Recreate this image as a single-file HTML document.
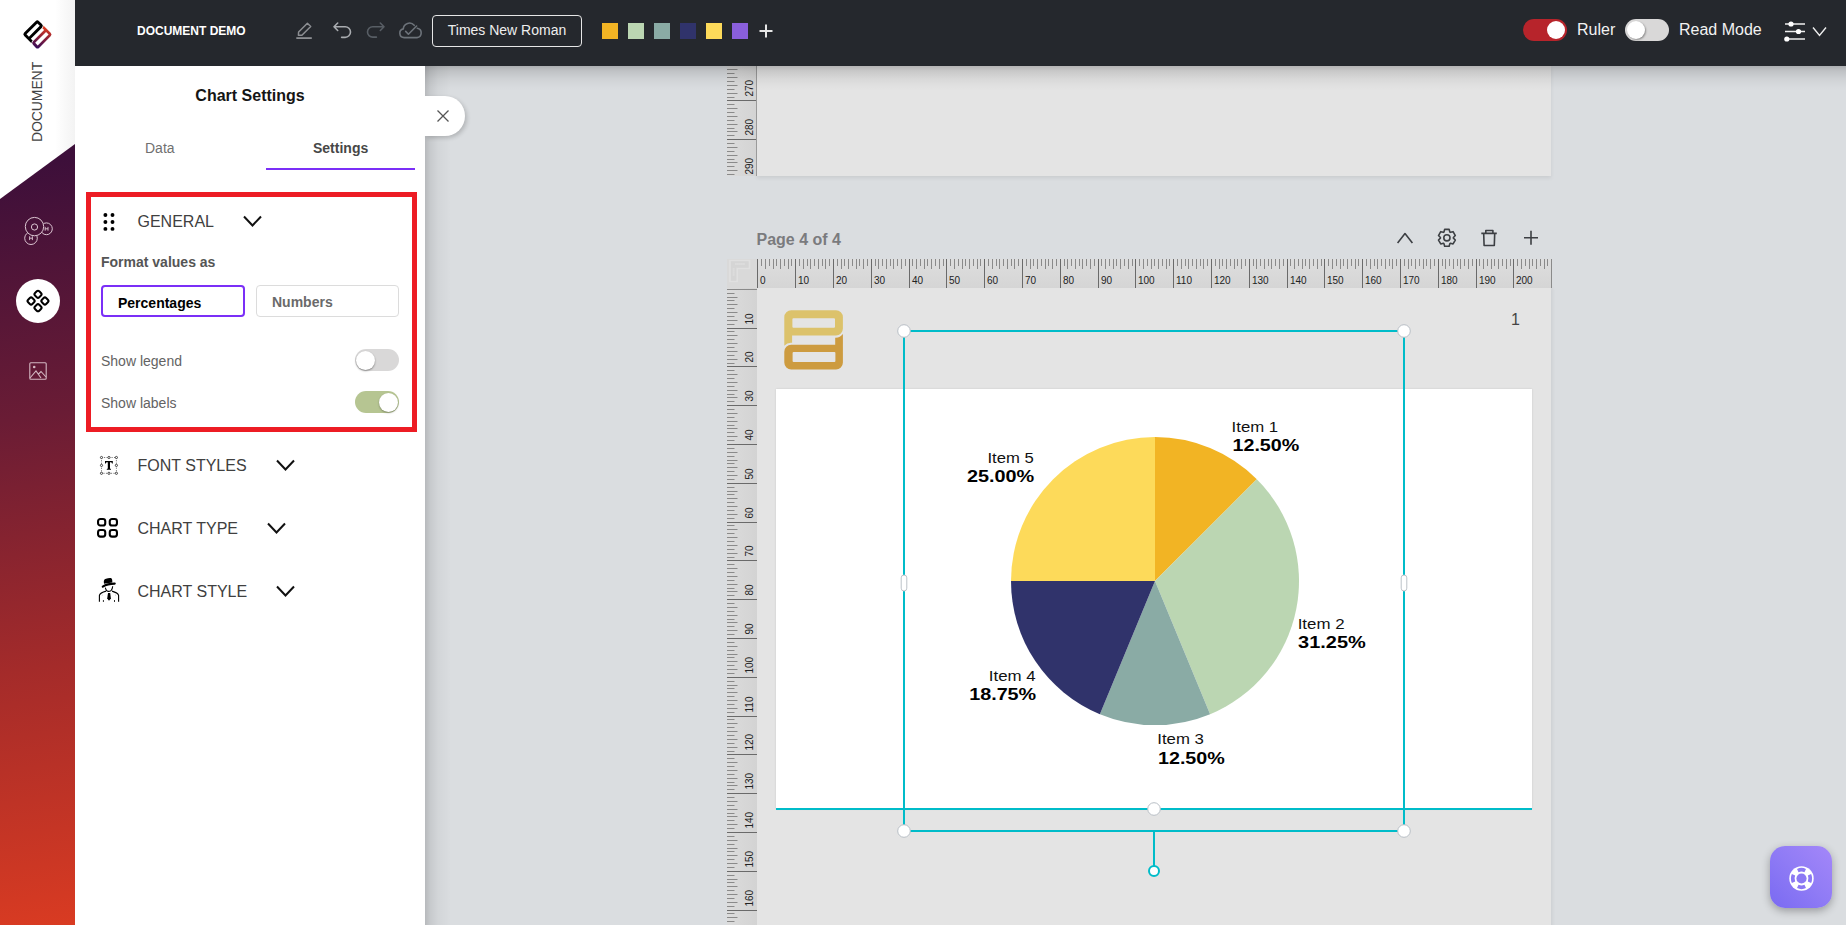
<!DOCTYPE html>
<html><head><meta charset="utf-8">
<style>
*{box-sizing:border-box}
html,body{margin:0;padding:0}
body{width:1846px;height:925px;overflow:hidden;position:relative;font-family:"Liberation Sans",sans-serif;background:#dadde0}
.a{position:absolute}
svg{position:absolute;overflow:visible}
/* sidebar */
#side{left:0;top:0;width:75px;height:925px;background:linear-gradient(172deg,#3a0e3a 0%,#3d0f3a 18%,#6a1c35 45%,#a42b2a 72%,#d93b22 100%)}
#sidewhite{left:0;top:0;width:75px;height:200px;background:linear-gradient(to right,#fff 0,#fff 55px,#f3f3f3 75px);clip-path:polygon(0 0,75px 0,75px 144px,0 199px)}
/* topbar */
#top{left:75px;top:0;width:1771px;height:66px;background:#25282d}
.tb-title{left:137px;top:23px;color:#fff;font-weight:bold;font-size:13px;white-space:nowrap}
.fontbtn{left:432px;top:15px;width:150px;height:32px;border:1.5px solid #e6e6e6;border-radius:4px;color:#eee;font-size:14px;text-align:center;line-height:29px}
.sw{top:23px;width:16px;height:16px}
.tog{width:44px;height:22px;border-radius:11px}
.knob{position:absolute;top:2px;width:18px;height:18px;border-radius:50%;background:#fff}
.toptxt{color:#f2f2f2;font-size:17px;top:20px;white-space:nowrap}
/* panel */
#panel{left:75px;top:66px;width:350px;height:859px;background:#fff}
.sec{color:#404040;font-size:16px;white-space:nowrap}
.chev{position:absolute}
/* canvas */
#canvas{left:425px;top:66px;width:1421px;height:859px;background:#dadde0;overflow:hidden}
.ruler-h{background:linear-gradient(#dedede,#d5d5d5)}
.ruler-v{background:linear-gradient(to right,#dcdcdc,#d3d3d3)}
</style></head>
<body>
<div id="side" class="a"></div>
<div id="sidewhite" class="a"></div>
<!-- logo -->
<svg style="left:15px;top:12px" width="45" height="45" viewBox="0 0 45 45">
<defs><linearGradient id="lg1" gradientUnits="userSpaceOnUse" x1="784" y1="370" x2="843" y2="334"><stop offset="0" stop-color="#2a0a5e"/><stop offset="0.5" stop-color="#8a1f3a"/><stop offset="1" stop-color="#e8401c"/></linearGradient></defs>
<g transform="translate(22.4 22.4) rotate(-45) scale(0.36) translate(-813.6 -339.9)">
<path d="M784.3 345.7 V317.2 A7 7 0 0 1 791.3 310.2 H835.9 A7 7 0 0 1 842.9 317.2 V328.6 A7 7 0 0 1 835.9 335.6 H792.1 V342.8 A9 9 0 0 0 784.3 345.7 Z M792.4 318.2 H835 V327.8 H792.4 Z" fill="#000" fill-rule="evenodd"/>
<path d="M842.9 334.1 V362.6 A7 7 0 0 1 835.9 369.6 H791.3 A7 7 0 0 1 784.3 362.6 V351.7 A7 7 0 0 1 791.3 344.7 H835.2 V337.7 A9 9 0 0 0 842.9 334.1 Z M792.6 352.1 H835.4 V362.1 H792.6 Z" fill="url(#lg1)" fill-rule="evenodd"/>
</g></svg>
<div class="a" style="left:29px;top:142.3px;transform:rotate(-90deg);transform-origin:0 0;font-size:14px;color:#444;white-space:nowrap;letter-spacing:-0.1px">DOCUMENT</div>
<!-- molecule -->
<svg style="left:15px;top:205px" width="45" height="45" viewBox="0 0 45 45"><defs><mask id="mm"><rect width="45" height="45" fill="#fff"/><circle cx="19.5" cy="21.6" r="9.6" fill="#000"/></mask></defs><g fill="none" stroke="#dcc6d2" stroke-width="1"><circle cx="19.5" cy="21.6" r="9.2"/><circle cx="19.5" cy="22" r="3.1"/><g mask="url(#mm)"><circle cx="31.4" cy="23.8" r="5.9"/><circle cx="16" cy="33.2" r="6.3"/></g></g><g stroke="#dcc6d2" stroke-width="0.9" fill="none"><path d="M30.2 21.9V25.7M33 21.9V25.7M30.2 23.8H33M14.6 31.3V35.1M17.4 31.3V35.1M14.6 33.2H17.4"/></g></svg>
<div class="a" style="left:16px;top:279px;width:44px;height:44px;border-radius:50%;background:#fff"></div>
<svg style="left:26px;top:289px" width="24" height="24" viewBox="0 0 24 24"><g fill="none" stroke="#000" stroke-width="2"><rect x="9" y="2.3" width="6" height="6" rx="1.8" transform="rotate(45 12 5.3)"/><rect x="9" y="15.7" width="6" height="6" rx="1.8" transform="rotate(45 12 18.7)"/><rect x="2.0999999999999996" y="9" width="6" height="6" rx="1.8" transform="rotate(45 5.1 12)"/><rect x="15.899999999999999" y="9" width="6" height="6" rx="1.8" transform="rotate(45 18.9 12)"/></g></svg>
<!-- image icon -->
<svg style="left:29px;top:362px" width="18" height="18" viewBox="0 0 18 18"><g fill="none" stroke="#d3b8c2" stroke-width="1.1"><rect x="0.8" y="0.8" width="16.4" height="16.4" rx="1"/><path d="M1 16 L7 9 L12 16 M9 12.5 L12 9.5 L17 15"/></g><circle cx="5.2" cy="5" r="1.3" fill="#d3b8c2"/></svg>


<div id="top" class="a">
</div>
<div class="a tb-title" style="left:137px;top:24px;font-size:12px">DOCUMENT DEMO</div>
<!-- pencil/undo/redo/cloud -->
<svg style="left:290px;top:15px" width="140" height="30" viewBox="290 15 140 30"><g fill="none" stroke-width="1.6" stroke-linejoin="round" stroke-linecap="round">
<path d="M298.4 35.3 L298.6 32 L307.4 23.2 L310.7 26.5 L301.9 35.3 Z" stroke="#8c8e92" stroke-width="1.5"/>
<path d="M296.3 38.1 H311.8" stroke="#8c8e92" stroke-width="1.8" stroke-linecap="butt"/>
<path d="M337.7 23 L334 26.75 L337.7 30.5 M334.2 26.75 H345.2 A5.3 5.3 0 0 1 345.2 37.35 H341.6" stroke="#a9acb0"/>
<path d="M380.3 23 L384 26.75 L380.3 30.5 M383.8 26.75 H372.7 A5.2 5.2 0 0 0 372.7 37.15 H376.4" stroke="#585e65"/>
<path d="M404.2 37.6 A4.4 4.4 0 0 1 403.3 28.9 A6.2 6.2 0 0 1 414.2 25.3 M417.3 28.3 A4.7 4.7 0 0 1 417 37.6 H404.2" stroke="#6d737a"/>
<path d="M405.7 31.4 L408.4 34.2 L416.6 26" stroke="#6d737a"/>
</g></svg>
<div class="a fontbtn">Times New Roman</div>
<div class="a sw" style="left:602px;background:#f2b424"></div>
<div class="a sw" style="left:628px;background:#bbd6b2"></div>
<div class="a sw" style="left:654px;background:#8aaba5"></div>
<div class="a sw" style="left:680px;background:#30336b"></div>
<div class="a sw" style="left:706px;background:#fdda5a"></div>
<div class="a sw" style="left:732px;background:#8a5fdc"></div>
<svg style="left:759px;top:24px" width="14" height="14" viewBox="0 0 14 14"><path d="M7 0.5 V13.5 M0.5 7 H13.5" stroke="#e6e6e6" stroke-width="2"/></svg>
<div class="a tog" style="left:1523px;top:19px;background:#b7242b"><div class="knob" style="left:24px"></div></div>
<div class="a toptxt" style="left:1577px;font-size:16px;top:21px">Ruler</div>
<div class="a tog" style="left:1625px;top:19px;background:#d9d8d8"><div class="knob" style="left:1.5px;box-shadow:1px 1px 2px rgba(0,0,0,.35)"></div></div>
<div class="a toptxt" style="left:1679px;font-size:16px;top:21px">Read Mode</div>
<!-- sliders -->
<svg style="left:1784px;top:20px" width="22" height="22" viewBox="0 0 22 22"><g stroke="#eee" stroke-width="1.6"><path d="M1 4 H21 M1 11.5 H21 M1 19 H21"/></g><g fill="#fff"><circle cx="7" cy="4" r="2.6"/><circle cx="14.5" cy="11.5" r="2.6"/><circle cx="2.8" cy="19" r="2.6"/></g></svg>
<svg style="left:1812px;top:26px" width="15" height="11" viewBox="0 0 15 11"><path d="M1 1.5 L7.5 9.5 L14 1.5" fill="none" stroke="#eee" stroke-width="1.4"/></svg>

<div id="panel" class="a"></div>
<div class="a" style="left:75px;top:87px;width:350px;text-align:center;font-size:16px;font-weight:bold;color:#151515">Chart Settings</div>
<div class="a" style="left:145px;top:140px;font-size:14px;color:#707070">Data</div>
<div class="a" style="left:313px;top:140px;font-size:14px;font-weight:bold;color:#474747">Settings</div>
<div class="a" style="left:266px;top:168px;width:149px;height:2px;background:#7b2ff7"></div>
<!-- red box -->
<div class="a" style="left:86px;top:192px;width:331px;height:240px;border:5px solid #ed1c24"></div>
<svg style="left:100px;top:210px" width="18" height="22" viewBox="0 0 18 22"><g fill="#000"><circle cx="5.4" cy="5" r="1.95"/><circle cx="12.5" cy="5" r="1.95"/><circle cx="5.4" cy="12" r="1.95"/><circle cx="12.5" cy="12" r="1.95"/><circle cx="5.4" cy="18.9" r="1.95"/><circle cx="12.5" cy="18.9" r="1.95"/></g></svg>
<div class="a sec" style="left:137.5px;top:213px">GENERAL</div>
<svg style="left:243px;top:215px" width="19" height="12" viewBox="0 0 19 12"><path d="M1 1.5 L9.5 10.5 L18 1.5" fill="none" stroke="#111" stroke-width="2"/></svg>
<div class="a" style="left:101px;top:254px;font-size:14px;font-weight:bold;color:#555">Format values as</div>
<div class="a" style="left:101px;top:285px;width:144px;height:32px;border:2px solid #7b2ff7;border-radius:4px"></div>
<div class="a" style="left:118px;top:295px;font-size:14px;font-weight:bold;color:#000">Percentages</div>
<div class="a" style="left:256px;top:285px;width:143px;height:32px;border:1px solid #dcdcdc;border-radius:4px"></div>
<div class="a" style="left:272px;top:294px;font-size:14px;font-weight:bold;color:#6a6a6a">Numbers</div>
<div class="a" style="left:101px;top:353px;font-size:14px;color:#636363">Show legend</div>
<div class="a tog" style="left:355px;top:349px;background:#d9d8d8"><div class="knob" style="left:1px;top:1.5px;width:19px;height:19px;box-shadow:0 1px 2px rgba(0,0,0,.4)"></div></div>
<div class="a" style="left:101px;top:395px;font-size:14px;color:#636363">Show labels</div>
<div class="a tog" style="left:355px;top:391px;background:#b6c592"><div class="knob" style="left:24px;top:1.5px;width:19px;height:19px;box-shadow:0 1px 2px rgba(0,0,0,.3)"></div></div>
<!-- font styles -->
<svg style="left:99px;top:455px" width="20" height="21" viewBox="0 0 20 21"><path d="M2.5 2.5 H17.4 V18.3 H2.5 Z" fill="none" stroke="#444" stroke-width="0.7" stroke-dasharray="1.2 1.3"/><g fill="#fff" stroke="#333" stroke-width="0.9"><circle cx="2.5" cy="2.5" r="1.1"/><circle cx="2.5" cy="10.4" r="1.1"/><circle cx="2.5" cy="18.3" r="1.1"/><circle cx="9.95" cy="2.5" r="1.1"/><circle cx="9.95" cy="18.3" r="1.1"/><circle cx="17.4" cy="2.5" r="1.1"/><circle cx="17.4" cy="10.4" r="1.1"/><circle cx="17.4" cy="18.3" r="1.1"/></g><path d="M6 5.9 H13.8 V8.6 H13 C12.8 7.6 12.5 7.3 11.4 7.3 H11 V13.3 C11 13.7 11.3 13.8 12 13.9 V14.8 H7.8 V13.9 C8.5 13.8 8.8 13.7 8.8 13.3 V7.3 H8.4 C7.3 7.3 7 7.6 6.8 8.6 H6 Z" fill="#000"/></svg>
<div class="a sec" style="left:137.5px;top:457px">FONT STYLES</div>
<svg style="left:276px;top:459px" width="19" height="12" viewBox="0 0 19 12"><path d="M1 1.5 L9.5 10.5 L18 1.5" fill="none" stroke="#111" stroke-width="2"/></svg>
<!-- chart type -->
<svg style="left:97px;top:518px" width="22" height="21" viewBox="0 0 22 21"><g fill="none" stroke="#000" stroke-width="2.1"><rect x="1.05" y="1.05" width="7.2" height="6.5" rx="2.3"/><rect x="12.75" y="1.05" width="7.2" height="6.5" rx="2.3"/><rect x="1.05" y="12.05" width="7.2" height="6.6" rx="2.3"/><rect x="12.75" y="12.05" width="7.2" height="6.6" rx="2.3"/></g></svg>
<div class="a sec" style="left:137.5px;top:520px">CHART TYPE</div>
<svg style="left:267px;top:522px" width="19" height="12" viewBox="0 0 19 12"><path d="M1 1.5 L9.5 10.5 L18 1.5" fill="none" stroke="#111" stroke-width="2"/></svg>
<!-- chart style -->
<svg style="left:94px;top:574px" width="30" height="32" viewBox="0 0 30 32"><path d="M10 9.8 C9.5 7 9.8 5.3 12 4.8 C14 4.3 16.5 3.6 17.6 4.6 C18.3 5.5 18.4 7 18.3 8.6 Z" fill="#000"/><path d="M8.8 12.6 C11 11.2 17 9.6 20.7 9.6" fill="none" stroke="#000" stroke-width="2.2" stroke-linecap="round"/><path d="M11.3 13.6 C11.8 15.8 12.6 17.4 14.8 17.4 C17 17.4 18.3 15.5 18.7 12.2" fill="none" stroke="#000" stroke-width="1.1"/><path d="M12.1 17.1 C9 18 6 19 5.4 21.4 V27.8 M18 17.1 C21 18 24 19 24.6 21.4 V27.8" fill="none" stroke="#000" stroke-width="1.1"/><path d="M14 19 H16.2 L16.9 24.5 L15 26.8 L13.2 24.5 Z" fill="#000"/><path d="M9.4 26.2 V27.8 M20.5 26.2 V27.8" stroke="#000" stroke-width="1"/><path d="M8.3 20.5 V21.8 M21.5 20.5 V21.8" stroke="#ccc" stroke-width="0.8"/></svg>
<div class="a sec" style="left:137.5px;top:583px">CHART STYLE</div>
<svg style="left:276px;top:585px" width="19" height="12" viewBox="0 0 19 12"><path d="M1 1.5 L9.5 10.5 L18 1.5" fill="none" stroke="#111" stroke-width="2"/></svg>

<div id="canvas" class="a"></div>
<!--CANVAS-->
<div class="a" style="left:757px;top:66px;width:794px;height:110px;background:#e4e4e4;box-shadow:0 2px 4px rgba(0,0,0,.08)"></div>
<div class="a ruler-v" style="left:727px;top:66px;width:30px;height:110px"></div>
<svg style="left:727px;top:66px;overflow:hidden" width="30" height="110" font-family="Liberation Sans"><path d="M0 34.5H30M0 73.5H30M0 112.5H30" stroke="#6a6a6a"/><path d="M0 -0.5H7.5M0 7.5H7.5M0 15.5H7.5M0 23.5H7.5M0 31.5H7.5M0 38.5H7.5M0 46.5H7.5M0 54.5H7.5M0 62.5H7.5M0 69.5H7.5M0 77.5H7.5M0 85.5H7.5M0 93.5H7.5M0 100.5H7.5M0 108.5H7.5M0 3.5H10.5M0 11.5H10.5M0 19.5H10.5M0 27.5H10.5M0 42.5H10.5M0 50.5H10.5M0 58.5H10.5M0 65.5H10.5M0 81.5H10.5M0 89.5H10.5M0 96.5H10.5M0 104.5H10.5" stroke="#8a8a8a"/><g font-size="10" fill="#222"><text transform="translate(25.5 30.5) rotate(-90)">270</text><text transform="translate(25.5 69.5) rotate(-90)">280</text><text transform="translate(25.5 108.5) rotate(-90)">290</text></g></svg>
<div class="a" style="left:756px;top:66px;width:1px;height:110px;background:#9a9a9a"></div>
<div class="a" style="left:757px;top:288px;width:794px;height:700px;background:#e4e4e4;box-shadow:1px 0 4px rgba(0,0,0,.08)"></div>
<div class="a ruler-h" style="left:757px;top:259px;width:794px;height:29px"></div>
<div class="a" style="left:727px;top:259px;width:30px;height:29px;background:#d9d9d9"></div>
<svg style="left:727px;top:259px" width="30" height="30" viewBox="727 259 30 30"><path d="M730 260.5 H749.5 V268.5 H737.2 V281.5 H730 Z" fill="#d5d5d5" stroke="#e0e0e0" stroke-width="1.6"/><path d="M736 263V265M738 263V265M740 263V265M742 263V265M744 263V265M732.6 269H734.6M732.6 271H734.6M732.6 273H734.6M732.6 275H734.6" stroke="#e2e2e2" stroke-width="1"/></svg>
<svg style="left:757px;top:259px" width="794" height="29" font-family="Liberation Sans"><path d="M0.5 0V29M38.5 0V29M76.5 0V29M114.5 0V29M152.5 0V29M189.5 0V29M227.5 0V29M265.5 0V29M303.5 0V29M341.5 0V29M378.5 0V29M416.5 0V29M454.5 0V29M492.5 0V29M530.5 0V29M567.5 0V29M605.5 0V29M643.5 0V29M681.5 0V29M719.5 0V29M756.5 0V29" stroke="#6a6a6a"/><path d="M4.5 0V7M12.5 0V7M19.5 0V7M27.5 0V7M34.5 0V7M42.5 0V7M50.5 0V7M57.5 0V7M65.5 0V7M72.5 0V7M80.5 0V7M87.5 0V7M95.5 0V7M102.5 0V7M110.5 0V7M118.5 0V7M125.5 0V7M133.5 0V7M140.5 0V7M148.5 0V7M155.5 0V7M163.5 0V7M170.5 0V7M178.5 0V7M186.5 0V7M193.5 0V7M201.5 0V7M208.5 0V7M216.5 0V7M223.5 0V7M231.5 0V7M239.5 0V7M246.5 0V7M254.5 0V7M261.5 0V7M269.5 0V7M276.5 0V7M284.5 0V7M291.5 0V7M299.5 0V7M307.5 0V7M314.5 0V7M322.5 0V7M329.5 0V7M337.5 0V7M344.5 0V7M352.5 0V7M359.5 0V7M367.5 0V7M375.5 0V7M382.5 0V7M390.5 0V7M397.5 0V7M405.5 0V7M412.5 0V7M420.5 0V7M428.5 0V7M435.5 0V7M443.5 0V7M450.5 0V7M458.5 0V7M465.5 0V7M473.5 0V7M480.5 0V7M488.5 0V7M496.5 0V7M503.5 0V7M511.5 0V7M518.5 0V7M526.5 0V7M533.5 0V7M541.5 0V7M548.5 0V7M556.5 0V7M564.5 0V7M571.5 0V7M579.5 0V7M586.5 0V7M594.5 0V7M601.5 0V7M609.5 0V7M617.5 0V7M624.5 0V7M632.5 0V7M639.5 0V7M647.5 0V7M654.5 0V7M662.5 0V7M669.5 0V7M677.5 0V7M685.5 0V7M692.5 0V7M700.5 0V7M707.5 0V7M715.5 0V7M722.5 0V7M730.5 0V7M737.5 0V7M745.5 0V7M753.5 0V7M760.5 0V7M768.5 0V7M775.5 0V7M783.5 0V7M790.5 0V7M8.5 0V10M16.5 0V10M23.5 0V10M31.5 0V10M46.5 0V10M53.5 0V10M61.5 0V10M68.5 0V10M84.5 0V10M91.5 0V10M99.5 0V10M106.5 0V10M121.5 0V10M129.5 0V10M136.5 0V10M144.5 0V10M159.5 0V10M167.5 0V10M174.5 0V10M182.5 0V10M197.5 0V10M205.5 0V10M212.5 0V10M220.5 0V10M235.5 0V10M242.5 0V10M250.5 0V10M257.5 0V10M273.5 0V10M280.5 0V10M288.5 0V10M295.5 0V10M310.5 0V10M318.5 0V10M325.5 0V10M333.5 0V10M348.5 0V10M356.5 0V10M363.5 0V10M371.5 0V10M386.5 0V10M394.5 0V10M401.5 0V10M409.5 0V10M424.5 0V10M431.5 0V10M439.5 0V10M446.5 0V10M462.5 0V10M469.5 0V10M477.5 0V10M484.5 0V10M499.5 0V10M507.5 0V10M514.5 0V10M522.5 0V10M537.5 0V10M545.5 0V10M552.5 0V10M560.5 0V10M575.5 0V10M583.5 0V10M590.5 0V10M598.5 0V10M613.5 0V10M620.5 0V10M628.5 0V10M635.5 0V10M651.5 0V10M658.5 0V10M666.5 0V10M673.5 0V10M688.5 0V10M696.5 0V10M703.5 0V10M711.5 0V10M726.5 0V10M734.5 0V10M741.5 0V10M749.5 0V10M764.5 0V10M772.5 0V10M779.5 0V10M787.5 0V10M794.5 0V29" stroke="#8a8a8a"/><g font-size="10" fill="#222"><text x="3.0" y="25">0</text><text x="41.0" y="25">10</text><text x="79.0" y="25">20</text><text x="117.0" y="25">30</text><text x="155.0" y="25">40</text><text x="192.0" y="25">50</text><text x="230.0" y="25">60</text><text x="268.0" y="25">70</text><text x="306.0" y="25">80</text><text x="344.0" y="25">90</text><text x="381.0" y="25">100</text><text x="419.0" y="25">110</text><text x="457.0" y="25">120</text><text x="495.0" y="25">130</text><text x="533.0" y="25">140</text><text x="570.0" y="25">150</text><text x="608.0" y="25">160</text><text x="646.0" y="25">170</text><text x="684.0" y="25">180</text><text x="722.0" y="25">190</text><text x="759.0" y="25">200</text></g></svg>
<div class="a ruler-v" style="left:727px;top:288px;width:30px;height:640px"></div>
<svg style="left:727px;top:288px;overflow:hidden" width="30" height="640" font-family="Liberation Sans"><path d="M0 40.5H30M0 78.5H30M0 117.5H30M0 156.5H30M0 195.5H30M0 234.5H30M0 272.5H30M0 311.5H30M0 350.5H30M0 389.5H30M0 428.5H30M0 466.5H30M0 505.5H30M0 544.5H30M0 583.5H30M0 622.5H30" stroke="#6a6a6a"/><path d="M0 5.5H7.5M0 12.5H7.5M0 20.5H7.5M0 28.5H7.5M0 36.5H7.5M0 43.5H7.5M0 51.5H7.5M0 59.5H7.5M0 67.5H7.5M0 75.5H7.5M0 82.5H7.5M0 90.5H7.5M0 98.5H7.5M0 106.5H7.5M0 113.5H7.5M0 121.5H7.5M0 129.5H7.5M0 137.5H7.5M0 144.5H7.5M0 152.5H7.5M0 160.5H7.5M0 168.5H7.5M0 175.5H7.5M0 183.5H7.5M0 191.5H7.5M0 199.5H7.5M0 206.5H7.5M0 214.5H7.5M0 222.5H7.5M0 230.5H7.5M0 237.5H7.5M0 245.5H7.5M0 253.5H7.5M0 261.5H7.5M0 269.5H7.5M0 276.5H7.5M0 284.5H7.5M0 292.5H7.5M0 300.5H7.5M0 307.5H7.5M0 315.5H7.5M0 323.5H7.5M0 331.5H7.5M0 338.5H7.5M0 346.5H7.5M0 354.5H7.5M0 362.5H7.5M0 369.5H7.5M0 377.5H7.5M0 385.5H7.5M0 393.5H7.5M0 400.5H7.5M0 408.5H7.5M0 416.5H7.5M0 424.5H7.5M0 431.5H7.5M0 439.5H7.5M0 447.5H7.5M0 455.5H7.5M0 463.5H7.5M0 470.5H7.5M0 478.5H7.5M0 486.5H7.5M0 494.5H7.5M0 501.5H7.5M0 509.5H7.5M0 517.5H7.5M0 525.5H7.5M0 532.5H7.5M0 540.5H7.5M0 548.5H7.5M0 556.5H7.5M0 563.5H7.5M0 571.5H7.5M0 579.5H7.5M0 587.5H7.5M0 594.5H7.5M0 602.5H7.5M0 610.5H7.5M0 618.5H7.5M0 625.5H7.5M0 633.5H7.5M0 641.5H7.5M0 1.5H30M0 9.5H10.5M0 16.5H10.5M0 24.5H10.5M0 32.5H10.5M0 47.5H10.5M0 55.5H10.5M0 63.5H10.5M0 71.5H10.5M0 86.5H10.5M0 94.5H10.5M0 102.5H10.5M0 109.5H10.5M0 125.5H10.5M0 133.5H10.5M0 140.5H10.5M0 148.5H10.5M0 164.5H10.5M0 172.5H10.5M0 179.5H10.5M0 187.5H10.5M0 203.5H10.5M0 210.5H10.5M0 218.5H10.5M0 226.5H10.5M0 241.5H10.5M0 249.5H10.5M0 257.5H10.5M0 265.5H10.5M0 280.5H10.5M0 288.5H10.5M0 296.5H10.5M0 303.5H10.5M0 319.5H10.5M0 327.5H10.5M0 334.5H10.5M0 342.5H10.5M0 358.5H10.5M0 366.5H10.5M0 373.5H10.5M0 381.5H10.5M0 397.5H10.5M0 404.5H10.5M0 412.5H10.5M0 420.5H10.5M0 435.5H10.5M0 443.5H10.5M0 451.5H10.5M0 459.5H10.5M0 474.5H10.5M0 482.5H10.5M0 490.5H10.5M0 497.5H10.5M0 513.5H10.5M0 521.5H10.5M0 528.5H10.5M0 536.5H10.5M0 552.5H10.5M0 560.5H10.5M0 567.5H10.5M0 575.5H10.5M0 591.5H10.5M0 598.5H10.5M0 606.5H10.5M0 614.5H10.5M0 629.5H10.5M0 637.5H10.5" stroke="#8a8a8a"/><g font-size="10" fill="#222"><text transform="translate(25.5 36.5) rotate(-90)">10</text><text transform="translate(25.5 74.5) rotate(-90)">20</text><text transform="translate(25.5 113.5) rotate(-90)">30</text><text transform="translate(25.5 152.5) rotate(-90)">40</text><text transform="translate(25.5 191.5) rotate(-90)">50</text><text transform="translate(25.5 230.5) rotate(-90)">60</text><text transform="translate(25.5 268.5) rotate(-90)">70</text><text transform="translate(25.5 307.5) rotate(-90)">80</text><text transform="translate(25.5 346.5) rotate(-90)">90</text><text transform="translate(25.5 385.5) rotate(-90)">100</text><text transform="translate(25.5 424.5) rotate(-90)">110</text><text transform="translate(25.5 462.5) rotate(-90)">120</text><text transform="translate(25.5 501.5) rotate(-90)">130</text><text transform="translate(25.5 540.5) rotate(-90)">140</text><text transform="translate(25.5 579.5) rotate(-90)">150</text><text transform="translate(25.5 618.5) rotate(-90)">160</text></g></svg>
<!--/CANVAS-->
<!--CHART-->
<svg style="left:780px;top:306px" width="68" height="68" viewBox="780 306 68 68">
<path d="M784.3 345.7 V317.2 A7 7 0 0 1 791.3 310.2 H835.9 A7 7 0 0 1 842.9 317.2 V328.6 A7 7 0 0 1 835.9 335.6 H792.1 V342.8 A9 9 0 0 0 784.3 345.7 Z M793.4 318.2 H834 A1 1 0 0 1 835 319.2 V326.8 A1 1 0 0 1 834 327.8 H793.4 A1 1 0 0 1 792.4 326.8 V319.2 A1 1 0 0 1 793.4 318.2 Z" fill="#dcc26b" fill-rule="evenodd"/>
<path d="M842.9 334.1 V362.6 A7 7 0 0 1 835.9 369.6 H791.3 A7 7 0 0 1 784.3 362.6 V351.7 A7 7 0 0 1 791.3 344.7 H835.2 V337.7 A9 9 0 0 0 842.9 334.1 Z M793.6 352.1 H834.4 A1 1 0 0 1 835.4 353.1 V361.1 A1 1 0 0 1 834.4 362.1 H793.6 A1 1 0 0 1 792.6 361.1 V353.1 A1 1 0 0 1 793.6 352.1 Z" fill="#cd9b3f" fill-rule="evenodd"/>
</svg>
<div class="a" style="left:1511px;top:311px;font-size:16px;color:#444">1</div>
<div class="a" style="left:776px;top:389px;width:756px;height:420px;background:#fff;box-shadow:0 0 2px rgba(0,0,0,.12)"></div>
<svg style="left:0;top:0" width="1846" height="925"><path d="M1155.0 581.1L1155.00 437.10A144 144 0 0 1 1256.82 479.28Z" fill="#f2b424"/><path d="M1155.0 581.1L1256.82 479.28A144 144 0 0 1 1210.11 714.14Z" fill="#bbd6b2"/><path d="M1155.0 581.1L1210.11 714.14A144 144 0 0 1 1099.89 714.14Z" fill="#8aaba5"/><path d="M1155.0 581.1L1099.89 714.14A144 144 0 0 1 1011.00 581.10Z" fill="#30336b"/><path d="M1155.0 581.1L1011.00 581.10A144 144 0 0 1 1155.00 437.10Z" fill="#fdda5a"/></svg>
<svg style="left:0;top:0" width="1846" height="925" font-family="Liberation Sans"><text x="1231.6" y="431.5" font-size="15" fill="#111" textLength="46.6" lengthAdjust="spacingAndGlyphs">Item 1</text><text x="1232.5" y="451" font-size="17" font-weight="bold" fill="#000" textLength="66.8" lengthAdjust="spacingAndGlyphs">12.50%</text><text x="987.4" y="462.8" font-size="15" fill="#111" textLength="46.3" lengthAdjust="spacingAndGlyphs">Item 5</text><text x="966.9" y="482" font-size="17" font-weight="bold" fill="#000" textLength="67.3" lengthAdjust="spacingAndGlyphs">25.00%</text><text x="1297.7" y="628.8" font-size="15" fill="#111" textLength="46.9" lengthAdjust="spacingAndGlyphs">Item 2</text><text x="1298.1" y="648.3" font-size="17" font-weight="bold" fill="#000" textLength="67.6" lengthAdjust="spacingAndGlyphs">31.25%</text><text x="988.8" y="680.6" font-size="15" fill="#111" textLength="46.9" lengthAdjust="spacingAndGlyphs">Item 4</text><text x="969.2" y="700" font-size="17" font-weight="bold" fill="#000" textLength="67.0" lengthAdjust="spacingAndGlyphs">18.75%</text><text x="1157.3" y="744" font-size="15" fill="#111" textLength="46.6" lengthAdjust="spacingAndGlyphs">Item 3</text><text x="1158.0" y="763.7" font-size="17" font-weight="bold" fill="#000" textLength="66.8" lengthAdjust="spacingAndGlyphs">12.50%</text></svg>
<svg style="left:0;top:0" width="1846" height="925"><path d="M776 809H1532M904 331H1404M904 831H1404M904 331V831M1404 331V831M1154 831V866" stroke="#00bcc9" stroke-width="2" fill="none"/><circle cx="904" cy="331" r="6.3" fill="#fff" stroke="#b9bfc6" stroke-width="1"/><circle cx="1404" cy="331" r="6.3" fill="#fff" stroke="#b9bfc6" stroke-width="1"/><circle cx="904" cy="831" r="6.3" fill="#fff" stroke="#b9bfc6" stroke-width="1"/><circle cx="1404" cy="831" r="6.3" fill="#fff" stroke="#b9bfc6" stroke-width="1"/><circle cx="1154" cy="809" r="6.3" fill="#fff" stroke="#b9bfc6" stroke-width="1"/><rect x="901.2" y="575" width="5.6" height="16" rx="2.8" fill="#fff" stroke="#bcc2c8" stroke-width="1"/><rect x="1401.2" y="575" width="5.6" height="16" rx="2.8" fill="#fff" stroke="#bcc2c8" stroke-width="1"/><circle cx="1154" cy="871" r="5" fill="#fff" stroke="#00bcc9" stroke-width="2"/></svg>
<!--/CHART-->



<!--EXTRA-->
<div class="a" style="left:425px;top:66px;width:1421px;height:859px;pointer-events:none;background:linear-gradient(to bottom,rgba(0,0,0,.21) 0,rgba(0,0,0,.12) 5px,rgba(0,0,0,.05) 13px,rgba(0,0,0,.015) 20px,rgba(0,0,0,0) 25px),linear-gradient(to right,rgba(0,0,0,.16) 0,rgba(0,0,0,.09) 5px,rgba(0,0,0,.035) 13px,rgba(0,0,0,0) 26px)"></div>

<div class="a" style="left:756.5px;top:231px;font-size:16px;font-weight:bold;color:#7a7b7e;white-space:nowrap">Page 4 of 4</div>
<svg style="left:1390px;top:222px" width="155" height="34" viewBox="1390 222 155 34"><g fill="none" stroke="#3c3f43" stroke-width="1.6" stroke-linejoin="round">
<path d="M1397.6 243 L1405 233.6 L1412.4 243"/>
<path d="M1443.95 232.01L1444.65 229.40L1449.15 229.40L1449.85 232.01L1450.44 232.35L1453.05 231.65L1455.30 235.55L1453.39 237.46L1453.39 238.14L1455.30 240.05L1453.05 243.95L1450.44 243.25L1449.85 243.59L1449.15 246.20L1444.65 246.20L1443.95 243.59L1443.36 243.25L1440.75 243.95L1438.50 240.05L1440.41 238.14L1440.41 237.46L1438.50 235.55L1440.75 231.65L1443.36 232.35Z"/><circle cx="1446.9" cy="237.8" r="3.1"/>
<path d="M1481.3 233.4 H1496.8 M1485.8 233.4 V230.5 H1492.9 V233.4 M1483.7 233.6 L1484.1 245.5 H1494.3 L1494.7 233.6"/>
<path d="M1531 230.8 V244.8 M1524 237.8 H1538" stroke-linecap="butt"/>
</g></svg>
<!-- close tab -->
<div class="a" style="left:425px;top:96px;width:40px;height:40px;background:#fff;border-radius:0 20px 20px 0;box-shadow:2px 2px 4px rgba(0,0,0,.18)"></div>
<div class="a" style="left:418px;top:96px;width:10px;height:40px;background:#fff"></div>
<svg style="left:436px;top:109px" width="14" height="14" viewBox="0 0 14 14"><path d="M1.5 1.5 L12.5 12.5 M12.5 1.5 L1.5 12.5" stroke="#555" stroke-width="1.3"/></svg>
<!-- help -->
<div class="a" style="left:1770px;top:846px;width:62px;height:62px;border-radius:15px;background:linear-gradient(45deg,#7a6af2 0%,#8f7bf5 50%,#a487f9 100%);box-shadow:0 3px 8px rgba(0,0,0,.3)"></div>
<svg style="left:1770px;top:846px" width="62" height="62" viewBox="1770 846 62 62"><circle cx="1801.5" cy="878.5" r="12.2" fill="#fff"/><circle cx="1801.5" cy="878.5" r="5.1" fill="#8c79f4"/><path d="M1811.11 874.02A10.6 10.6 0 0 1 1811.11 882.98L1807.84 881.46A7.0 7.0 0 0 0 1807.84 875.54ZM1805.98 888.11A10.6 10.6 0 0 1 1797.02 888.11L1798.54 884.84A7.0 7.0 0 0 0 1804.46 884.84ZM1791.89 882.98A10.6 10.6 0 0 1 1791.89 874.02L1795.16 875.54A7.0 7.0 0 0 0 1795.16 881.46ZM1797.02 868.89A10.6 10.6 0 0 1 1805.98 868.89L1804.46 872.16A7.0 7.0 0 0 0 1798.54 872.16Z" fill="#8c79f4"/></svg>
<!--/EXTRA-->
</body></html>
